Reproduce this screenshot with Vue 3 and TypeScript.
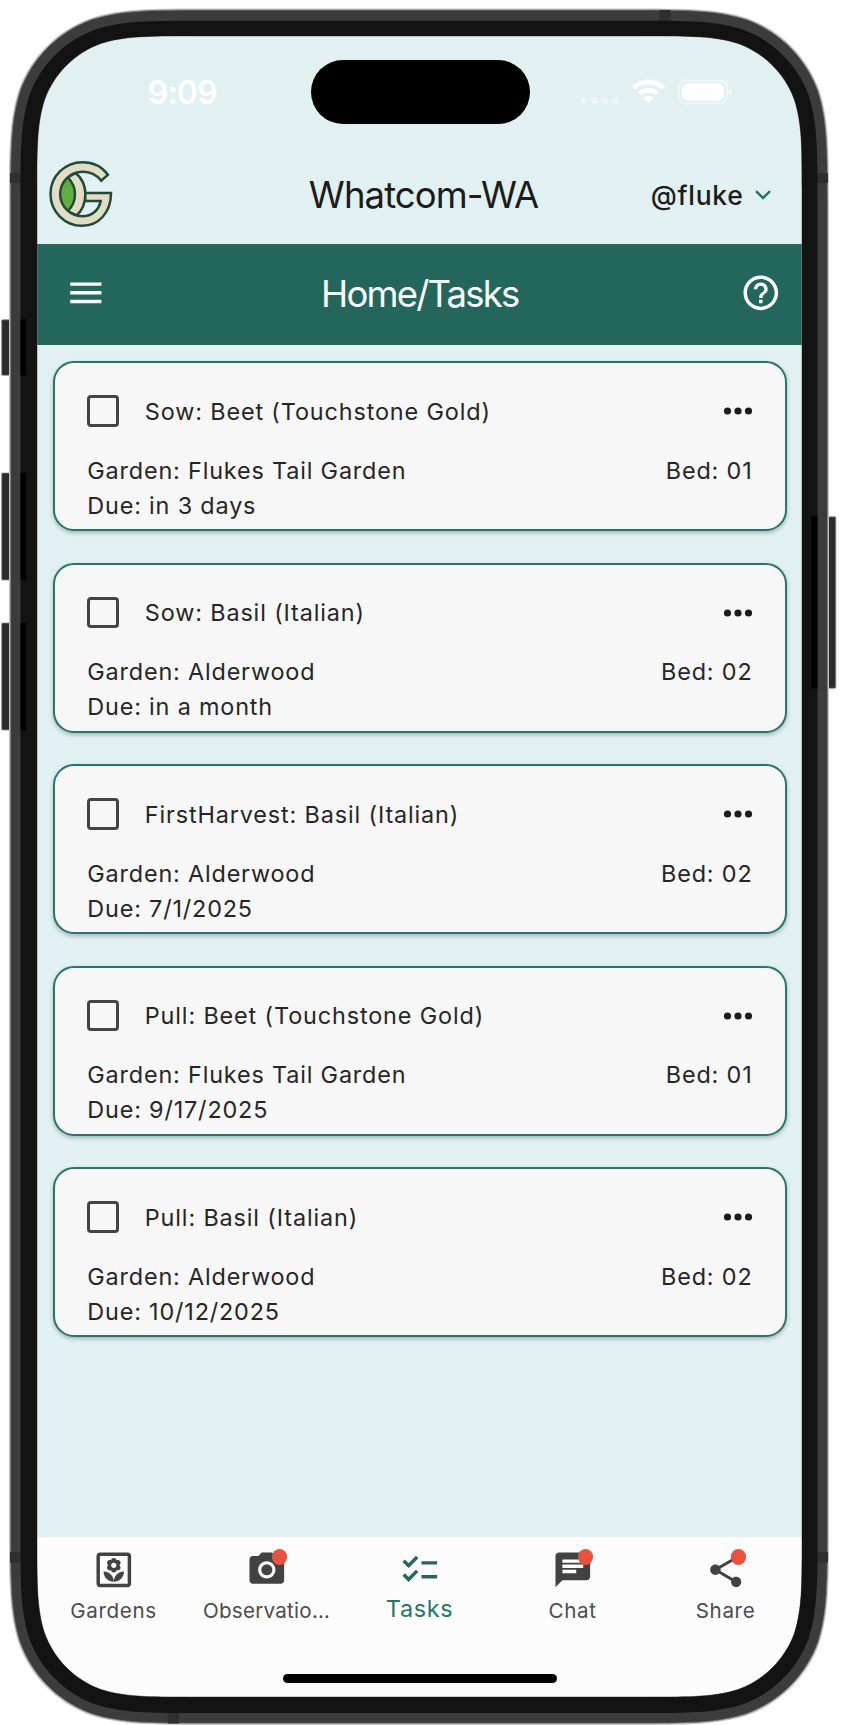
<script setup lang="ts">
interface Task {
  title: string
  garden: string
  due: string
  bed: string
}

interface Tab {
  label: string
  icon: 'yard' | 'camera' | 'checklist' | 'chat' | 'share'
  badge?: boolean
  active?: boolean
  tight?: boolean
}

const tasks: Task[] = [
  { title: 'Sow: Beet (Touchstone Gold)', garden: 'Flukes Tail Garden', due: 'in 3 days', bed: '01' },
  { title: 'Sow: Basil (Italian)', garden: 'Alderwood', due: 'in a month', bed: '02' },
  { title: 'FirstHarvest: Basil (Italian)', garden: 'Alderwood', due: '7/1/2025', bed: '02' },
  { title: 'Pull: Beet (Touchstone Gold)', garden: 'Flukes Tail Garden', due: '9/17/2025', bed: '01' },
  { title: 'Pull: Basil (Italian)', garden: 'Alderwood', due: '10/12/2025', bed: '02' },
]

const tabs: Tab[] = [
  { label: 'Gardens', icon: 'yard' },
  { label: 'Observatio…', icon: 'camera', badge: true, tight: true },
  { label: 'Tasks', icon: 'checklist', active: true },
  { label: 'Chat', icon: 'chat', badge: true },
  { label: 'Share', icon: 'share', badge: true },
]

/** Rectangle with continuous (squircle) corners, as used on the device body. */
function squircle(x0: number, y0: number, x1: number, y1: number, r: number): string {
  const k = [1.528665, 1.08849, 0.868407, 0.631494, 0.372824, 0.16906, 0.074911].map((v) => v * r)
  const [a, b, c, d, e, f, g] = k
  return [
    `M${x0 + a} ${y0}H${x1 - a}`,
    `C${x1 - b} ${y0} ${x1 - c} ${y0} ${x1 - d} ${y0 + g}`,
    `C${x1 - e} ${y0 + f} ${x1 - f} ${y0 + e} ${x1 - g} ${y0 + d}`,
    `C${x1} ${y0 + c} ${x1} ${y0 + b} ${x1} ${y0 + a}V${y1 - a}`,
    `C${x1} ${y1 - b} ${x1} ${y1 - c} ${x1 - g} ${y1 - d}`,
    `C${x1 - f} ${y1 - e} ${x1 - e} ${y1 - f} ${x1 - d} ${y1 - g}`,
    `C${x1 - c} ${y1} ${x1 - b} ${y1} ${x1 - a} ${y1}H${x0 + a}`,
    `C${x0 + b} ${y1} ${x0 + c} ${y1} ${x0 + d} ${y1 - g}`,
    `C${x0 + e} ${y1 - f} ${x0 + f} ${y1 - e} ${x0 + g} ${y1 - d}`,
    `C${x0} ${y1 - c} ${x0} ${y1 - b} ${x0} ${y1 - a}V${y0 + a}`,
    `C${x0} ${y0 + b} ${x0} ${y0 + c} ${x0 + g} ${y0 + d}`,
    `C${x0 + f} ${y0 + e} ${x0 + e} ${y0 + f} ${x0 + d} ${y0 + g}`,
    `C${x0 + c} ${y0} ${x0 + b} ${y0} ${x0 + a} ${y0}Z`,
  ].join('')
}

const screenHole = squircle(37, 36, 802, 1697, 101)
const halo = squircle(9, 8.5, 829, 1725, 129) + screenHole
const rim = squircle(10.5, 10, 827.5, 1723.3, 128) + screenHole
const bezel = squircle(20.5, 20.8, 817.5, 1713, 118) + screenHole
</script>

<template>
  <div class="device">
    <main class="screen">
      <div class="status">
        <span class="time">9:09</span>
        <div class="island"></div>
        <svg class="indicators" width="152" height="30" viewBox="0 0 152 30">
          <g fill="#ebf6f6">
            <circle cx="4" cy="23.5" r="3.3" />
            <circle cx="14.5" cy="23.5" r="3.3" />
            <circle cx="25" cy="23.5" r="3.3" />
            <circle cx="35.5" cy="23.5" r="3.3" />
          </g>
          <path
            fill="#fff"
            d="M68.500 2.800C62 2.800 56.300 5.300 52.100 9.300L55.300 12.600C58.700 9.400 63.300 7.400 68.500 7.400S78.300 9.400 81.700 12.600L84.900 9.300C80.700 5.300 75 2.800 68.500 2.800ZM68.500 11C64.400 11 60.700 12.500 57.900 15.100L61.100 18.300C63.100 16.500 65.700 15.500 68.500 15.500S73.900 16.500 75.900 18.300L79.100 15.100C76.300 12.500 72.600 11 68.500 11ZM68.500 19C66.600 19 64.900 19.700 63.500 20.900L68.500 26.200L73.500 20.900C72.100 19.700 70.400 19 68.500 19Z"
          />
          <rect x="99.200" y="3.500" width="47.600" height="23" rx="7.500" fill="none" stroke="#eef8f8" stroke-width="1.900" />
          <rect x="102.300" y="6.500" width="41.500" height="17" rx="5" fill="#fff" />
          <path d="M149 11.500c2.200.9 2.900 2.100 2.900 3.500s-.7 2.600-2.900 3.500z" fill="#eef8f8" />
        </svg>
      </div>

      <header class="header">
        <svg class="logo" width="66" height="70" viewBox="53 42 198 210">
          <path d="M113 97C98 108 89 126 89 147S98 188 113 199C127 185 134 167 134 147S127 111 113 97Z" fill="#5fae3e" />
          <g stroke="#1f4a3c" stroke-width="7.500" fill="#e2dcc4" stroke-linejoin="miter">
            <path d="M112 97L136 84C155 100 165 122 165 147S157 195 139 211L112 199C126 185 134 167 134 147S126 111 112 97Z" />
            <path
              d="M233 89A95.500 95.500 0 0 0 156 51.500A95.500 95.500 0 0 0 60.500 147A95.500 95.500 0 0 0 156 242.500C205 242.500 242 203 242 144H165V168H211C206 195 185 213.500 156 213.500A66.500 66.500 0 0 1 89.500 147A66.500 66.500 0 0 1 156 80.500C179 80.500 197 88 213 107Z"
            />
          </g>
        </svg>
        <h1>Whatcom-WA</h1>
        <div class="account">
          <span>@fluke</span>
          <svg width="18" height="12" viewBox="0 0 18 12">
            <path d="M2 2.200L9 9L16 2.200" fill="none" stroke="#23786b" stroke-width="2.500" />
          </svg>
        </div>
      </header>

      <nav class="toolbar">
        <svg class="icon" viewBox="0 0 24 24"><path d="M3 18h18v-2H3v2zm0-5h18v-2H3v2zm0-7v2h18V6H3z" /></svg>
        <h2>Home/Tasks</h2>
        <svg class="icon" viewBox="0 0 24 24">
          <path
            d="M11 18h2v-2h-2v2zm1-16C6.480 2 2 6.480 2 12s4.480 10 10 10 10-4.480 10-10S17.520 2 12 2zm0 18c-4.410 0-8-3.590-8-8s3.590-8 8-8 8 3.590 8 8-3.590 8-8 8zm0-14c-2.210 0-4 1.790-4 4h2c0-1.100.9-2 2-2s2 .9 2 2c0 2-3 1.750-3 5h2c0-2.250 3-2.500 3-5 0-2.210-1.790-4-4-4z"
          />
        </svg>
      </nav>

      <section class="list">
        <article v-for="task in tasks" :key="task.title" class="card">
          <div class="card-head">
            <span class="checkbox"></span>
            <span class="card-title">{{ task.title }}</span>
            <svg class="more" width="30" height="10" viewBox="0 0 30 10">
              <circle cx="4.500" cy="5" r="3.600" />
              <circle cx="15" cy="5" r="3.600" />
              <circle cx="25.500" cy="5" r="3.600" />
            </svg>
          </div>
          <div class="card-row">
            <span>Garden: {{ task.garden }}</span>
            <span>Bed: {{ task.bed }}</span>
          </div>
          <div class="card-row">Due: {{ task.due }}</div>
        </article>
      </section>

      <footer class="bottom">
        <div class="tabs">
          <div v-for="tab in tabs" :key="tab.label" class="tab" :class="{ active: tab.active, tight: tab.tight }">
            <div class="tab-icon">
              <svg class="icon" viewBox="0 0 24 24">
                <template v-if="tab.icon === 'yard'">
                  <path
                    fill-rule="evenodd"
                    d="M20 2H4c-1.100 0-2 .9-2 2v16c0 1.100.9 2 2 2h16c1.100 0 2-.9 2-2V4c0-1.100-.9-2-2-2zm0 18H4V4h16z"
                  />
                  <path d="M12 18.900c0-3.300-2.500-5.900-5.900-5.900 0 3.400 2.600 5.900 5.900 5.900zM12 18.900c3.300 0 5.900-2.500 5.900-5.900-3.400 0-5.900 2.600-5.900 5.900z" />
                  <path
                    fill-rule="evenodd"
                    d="M12 5.200c.8 0 1.400.5 1.550 1.300.9-.25 1.700 0 2.150.7.400.8.200 1.600-.5 2.200.7.600.9 1.400.5 2.200-.45.7-1.250.95-2.150.7-.15.8-.75 1.300-1.550 1.300s-1.400-.5-1.550-1.300c-.9.25-1.700 0-2.150-.7-.4-.8-.2-1.600.5-2.200-.7-.6-.9-1.400-.5-2.200.45-.7 1.250-.95 2.150-.7.150-.8.750-1.300 1.550-1.300zM12 7.900a1.500 1.500 0 1 0 0 3 1.500 1.500 0 1 0 0-3z"
                  />
                </template>
                <template v-else-if="tab.icon === 'camera'">
                  <circle cx="12" cy="12" r="3.200" />
                  <path
                    d="M9 2 7.170 4H4c-1.100 0-2 .9-2 2v12c0 1.100.9 2 2 2h16c1.100 0 2-.9 2-2V6c0-1.100-.9-2-2-2h-3.170L15 2H9zm3 15c-2.760 0-5-2.240-5-5s2.240-5 5-5 5 2.240 5 5-2.240 5-5 5z"
                  />
                </template>
                <path
                  v-else-if="tab.icon === 'checklist'"
                  d="M22 7h-9v2h9V7zm0 8h-9v2h9v-2zM5.540 11 2 7.460l1.410-1.410 2.120 2.120 4.240-4.240 1.410 1.410L5.540 11zm0 8L2 15.460l1.410-1.410 2.120 2.120 4.240-4.240 1.410 1.410L5.540 19z"
                />
                <path
                  v-else-if="tab.icon === 'chat'"
                  d="M20 2H4c-1.100 0-1.990.9-1.990 2L2 22l4-4h14c1.100 0 2-.9 2-2V4c0-1.100-.9-2-2-2zM6 9h12v2H6V9zm8 5H6v-2h8v2zm4-6H6V6h12v2z"
                />
                <path
                  v-else
                  d="M18 16.080c-.76 0-1.440.3-1.960.77L8.910 12.700c.05-.23.09-.46.09-.7s-.04-.47-.09-.7l7.050-4.110c.54.5 1.250.81 2.040.81 1.660 0 3-1.340 3-3s-1.340-3-3-3-3 1.340-3 3c0 .24.04.47.09.7L8.040 9.810C7.500 9.310 6.790 9 6 9c-1.660 0-3 1.340-3 3s1.340 3 3 3c.79 0 1.500-.31 2.040-.81l7.120 4.160c-.05.21-.08.43-.08.65 0 1.610 1.310 2.920 2.920 2.920s2.920-1.310 2.920-2.920-1.310-2.920-2.920-2.920z"
                />
              </svg>
              <span v-if="tab.badge" class="badge"></span>
            </div>
            <span class="tab-label">{{ tab.label }}</span>
          </div>
        </div>
        <div class="home-indicator"></div>
      </footer>
    </main>

    <svg class="frame" width="849" height="1725" viewBox="0 0 849 1725">
      <g fill="#2b2b2b" stroke="#8c8c8c" stroke-width="0.800">
        <rect x="1.700" y="319.800" width="12" height="55.500" rx="1" />
        <rect x="1.700" y="473" width="12" height="107" rx="1" />
        <rect x="1.700" y="623" width="12" height="107" rx="1" />
        <rect x="824" y="516.800" width="11.800" height="171.500" rx="1" />
      </g>
      <path :d="halo" fill="#c4c4c4" fill-rule="evenodd" />
      <path :d="rim" fill="#3c3c3c" stroke="#7c7c7c" stroke-width="0.800" fill-rule="evenodd" />
      <g fill="#2f2f2f">
        <rect x="10" y="173" width="11" height="10" />
        <rect x="817" y="173" width="11" height="10" />
        <rect x="10" y="1552" width="11" height="10.500" />
        <rect x="817" y="1552" width="11" height="10.500" />
        <rect x="659.500" y="10" width="11" height="11" />
        <rect x="168" y="1712" width="11" height="11.500" />
      </g>
      <path :d="bezel" fill="#131313" fill-rule="evenodd" />
      <g fill="#000">
        <rect x="20.500" y="319.500" width="5.700" height="56" />
        <rect x="20.500" y="472.700" width="5.700" height="107.600" />
        <rect x="20.500" y="622.700" width="5.700" height="107.600" />
        <rect x="811" y="516.500" width="6.500" height="172" />
      </g>
    </svg>
  </div>
</template>

<style>
body {
  background: #fff;
}
</style>

<style scoped>
.device {
  position: relative;
  box-sizing: border-box;
  width: 849px;
  height: 1725px;
  padding: 36px 47px 28px 37px;
  overflow: hidden;
  font-family: Inter, Roboto, sans-serif;
  color: #262626;
}
.frame {
  position: absolute;
  inset: 0;
  pointer-events: none;
}
.screen {
  display: flex;
  flex-direction: column;
  width: 765px;
  height: 1661px;
  overflow: hidden;
  border-radius: 85px;
  background: #e1f1f1;
}
.status {
  display: grid;
  grid-template-columns: 273.500px 219px 272.500px;
  align-items: center;
  height: 112px;
  flex: none;
}
.time {
  padding: 2px 0 0 17px;
  text-align: center;
  font-size: 32px;
  line-height: 40px;
  font-weight: 600;
  letter-spacing: -0.8px;
  color: #fff;
}
.island {
  height: 64px;
  border-radius: 32px;
  background: #000;
}
.indicators {
  margin-left: 50.500px;
}
.header {
  display: grid;
  grid-template-columns: 200px 1fr 200px;
  align-items: center;
  box-sizing: border-box;
  height: 96.200px;
  padding-bottom: 2.500px;
  flex: none;
}
.logo {
  margin: -2px 0 0 10.500px;
}
h1,
h2 {
  margin: 0;
  text-align: center;
  font-size: 36.500px;
  line-height: 48px;
  font-weight: 400;
}
h1 {
  padding-left: 8px;
  letter-spacing: -0.900px;
  color: #1c1c1c;
}
.account {
  display: flex;
  align-items: center;
  justify-content: flex-end;
  gap: 10px;
  padding-right: 30.500px;
  font-size: 26.500px;
  line-height: 36px;
  font-weight: 500;
  letter-spacing: 0.700px;
  color: #1c1c1c;
}
.icon {
  display: block;
  width: 41.600px;
  height: 41.600px;
  fill: currentColor;
}
.toolbar {
  display: flex;
  align-items: center;
  justify-content: space-between;
  box-sizing: border-box;
  height: 101px;
  padding: 0 20.500px 3px 28px;
  flex: none;
  background: #23675c;
  color: #fff;
}
.toolbar h2 {
  margin-left: -7px;
  padding-top: 2px;
  letter-spacing: -1.800px;
}
.list {
  display: flex;
  flex-direction: column;
  gap: 31.500px;
  flex: 1;
  padding: 16px 15.500px 0 16px;
}
.card {
  box-sizing: border-box;
  height: 170px;
  padding: 6.500px 32px 0 32.300px;
  border: 2px solid #23786b;
  border-radius: 21px;
  background: #f7f7f7;
  box-shadow: 0 2px 4px rgba(0, 0, 0, 0.25);
  font-size: 23.400px;
  line-height: 35px;
  letter-spacing: 0.830px;
}
.card-head {
  display: flex;
  align-items: center;
  height: 83px;
  letter-spacing: 0.870px;
}
.checkbox {
  box-sizing: border-box;
  width: 31.500px;
  height: 31.500px;
  border: 3.500px solid #444;
  border-radius: 4px;
}
.card-title {
  flex: 1;
  padding-left: 26px;
}
.more {
  fill: #1c1c1c;
}
.card-row {
  display: flex;
  justify-content: space-between;
}
.bottom {
  display: flex;
  flex-direction: column;
  align-items: center;
  justify-content: space-between;
  box-sizing: border-box;
  height: 160px;
  padding-bottom: 14px;
  flex: none;
  background: #fcfcfc;
}
.tabs {
  display: grid;
  grid-template-columns: repeat(5, 1fr);
  width: 100%;
}
.tab {
  display: flex;
  flex-direction: column;
  align-items: center;
  padding-top: 12.400px;
  color: #424242;
}
.tab-icon {
  position: relative;
}
.badge {
  position: absolute;
  top: -0.300px;
  right: -0.200px;
  width: 15.600px;
  height: 15.600px;
  border-radius: 50%;
  background: #e8523f;
}
.tab-label {
  font-size: 20.600px;
  line-height: 39px;
  letter-spacing: 0.650px;
  color: #4c4c4c;
}
.tight .tab-label {
  letter-spacing: 0.250px;
}
.tab.active {
  color: #23675c;
}
.active .tab-label {
  font-size: 23.400px;
  line-height: 36px;
  color: #23786b;
}
.home-indicator {
  width: 274px;
  height: 9px;
  border-radius: 5px;
  background: #000;
}
</style>
